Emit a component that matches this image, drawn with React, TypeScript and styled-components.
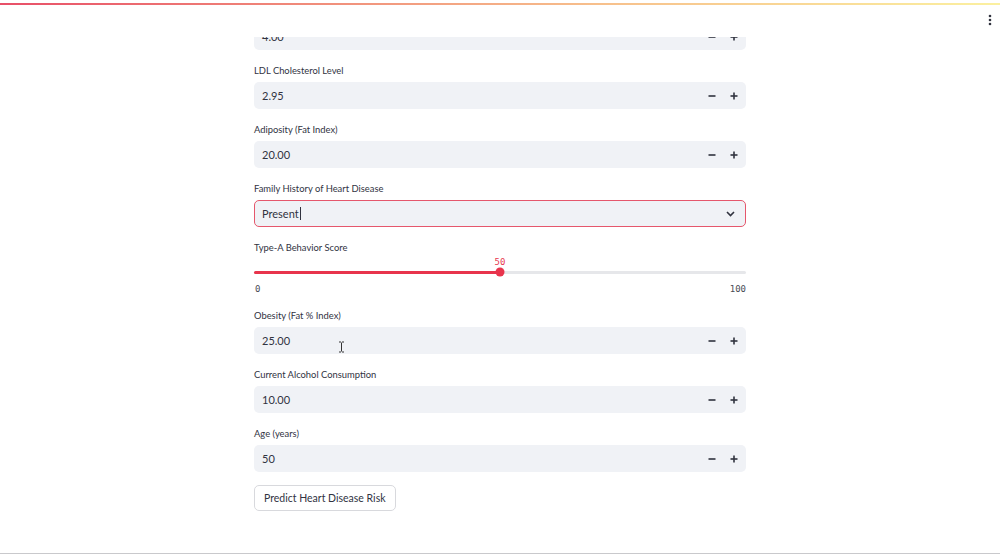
import React from "react";
import styled, { createGlobalStyle } from "styled-components";

const Global = createGlobalStyle`
  html, body { margin: 0; padding: 0; background: #ffffff; overflow: hidden; }
  body { font-family: "Lato", "Noto Sans", sans-serif; color: #31333f; }
  * { box-sizing: border-box; }
`;

const Header = styled.header`
  position: fixed;
  top: 0;
  left: 0;
  right: 0;
  height: 37px;
  background: #ffffff;
  z-index: 5;
`;

const Decoration = styled.div`
  margin-top: 3px;
  height: 2px;
  background: linear-gradient(90deg, #e84f68 0%, #f08a7a 30%, #f7c08c 60%, #fbf0a0 100%);
`;

const MenuButton = styled.div`
  position: absolute;
  right: 6px;
  top: 13px;
  width: 8px;
  height: 14px;
  display: flex;
  align-items: center;
  justify-content: center;
`;

const Main = styled.main`
  width: 492px;
  margin: 0 auto;
  padding-top: 4px;
  display: flex;
  flex-direction: column;
  gap: 13px;
`;

const Widget = styled.div`
  display: flex;
  flex-direction: column;
  gap: 5px;
`;

const Label = styled.label`
  font-size: 9.4px;
  line-height: 13px;
  padding-top: 1px;
  height: 14px;
  color: #31333f;
`;

const Field = styled.div<{ $focused?: boolean }>`
  height: 27px;
  border-radius: 5px;
  background: #f0f2f6;
  display: flex;
  align-items: center;
  padding-left: 7px;
  border: 1px solid ${(p) => (p.$focused ? "#e5576c" : "transparent")};
  position: relative;
`;

const Value = styled.span`
  flex: 1;
  font-size: 11px;
  color: #31333f;
  display: flex;
  align-items: center;
`;

const Caret = styled.span`
  display: inline-block;
  width: 1px;
  height: 13px;
  background: #31333f;
  margin-left: 1px;
`;

const StepGroup = styled.div`
  display: flex;
  height: 100%;
`;

const StepButton = styled.div`
  width: 22px;
  height: 100%;
  display: flex;
  align-items: center;
  justify-content: center;
  font-size: 12px;
  font-weight: 700;
  color: #31333f;
`;

const Chevron = styled.div`
  width: 30px;
  display: flex;
  align-items: center;
  justify-content: center;
`;

const SliderArea = styled.div`
  margin-top: -4px;
  display: flex;
  flex-direction: column;
`;

const ValueRow = styled.div`
  position: relative;
  height: 12px;
`;

const ThumbValue = styled.span`
  position: absolute;
  top: 1px;
  transform: translateX(-50%);
  font-family: "DejaVu Sans Mono", "Liberation Mono", monospace;
  font-size: 9px;
  line-height: 12px;
  color: #e8384f;
`;

const TrackRow = styled.div`
  position: relative;
  height: 10px;
  display: flex;
  align-items: center;
`;

const Track = styled.div`
  width: 100%;
  height: 3px;
  border-radius: 2px;
  background: #e6e7ea;
  position: relative;
`;

const TrackFill = styled.div`
  position: absolute;
  left: 0;
  top: 0;
  bottom: 0;
  background: #e8344c;
  border-radius: 2px;
`;

const Thumb = styled.div`
  position: absolute;
  top: 50%;
  width: 9px;
  height: 9px;
  border-radius: 50%;
  background: #e8344c;
  transform: translate(-50%, -50%);
`;

const TickRow = styled.div`
  margin-top: 6px;
  height: 12px;
  display: flex;
  justify-content: space-between;
  font-family: "DejaVu Sans Mono", "Liberation Mono", monospace;
  font-size: 9px;
  line-height: 12px;
  color: #4a4c55;
  padding-left: 1px;
`;

const Button = styled.button`
  align-self: flex-start;
  height: 26px;
  padding: 0 9px;
  border: 1px solid #d8d9dd;
  border-radius: 5px;
  background: #ffffff;
  font-family: "Lato", "Noto Sans", sans-serif;
  font-size: 10.5px;
  color: #31333f;
`;

const MouseCursor = styled.svg`
  position: fixed;
  left: 338px;
  top: 341px;
  z-index: 6;
`;

const BottomRule = styled.div`
  position: fixed;
  left: 0;
  right: 0;
  bottom: 1px;
  height: 1px;
  background: #c9c9cc;
`;

type NumberFieldProps = { label: string; value: string };

const NumberField = ({ label, value }: NumberFieldProps) => (
  <Widget>
    <Label>{label}</Label>
    <Field>
      <Value>{value}</Value>
      <StepGroup>
        <StepButton>
          <svg width="8" height="8" viewBox="0 0 8 8">
            <rect x="0.5" y="3.2" width="7" height="1.6" fill="#31333f" />
          </svg>
        </StepButton>
        <StepButton>
          <svg width="8" height="8" viewBox="0 0 8 8">
            <rect x="0.5" y="3.2" width="7" height="1.6" fill="#31333f" />
            <rect x="3.2" y="0.5" width="1.6" height="7" fill="#31333f" />
          </svg>
        </StepButton>
      </StepGroup>
    </Field>
  </Widget>
);

const SliderField = ({ label, value, min, max }: { label: string; value: number; min: number; max: number }) => {
  const pct = ((value - min) / (max - min)) * 100;
  return (
    <Widget>
      <Label>{label}</Label>
      <SliderArea>
        <ValueRow>
          <ThumbValue style={{ left: `${pct}%` }}>{value}</ThumbValue>
        </ValueRow>
        <TrackRow>
          <Track>
            <TrackFill style={{ width: `${pct}%` }} />
            <Thumb style={{ left: `${pct}%` }} />
          </Track>
        </TrackRow>
        <TickRow>
          <span>{min}</span>
          <span>{max}</span>
        </TickRow>
      </SliderArea>
    </Widget>
  );
};

export default function App() {
  return (
    <>
      <Global />
      <Header>
        <Decoration />
        <MenuButton>
          <svg width="4" height="12" viewBox="0 0 4 12">
            <circle cx="2" cy="2" r="1.3" fill="#31333f" />
            <circle cx="2" cy="6" r="1.3" fill="#31333f" />
            <circle cx="2" cy="10" r="1.3" fill="#31333f" />
          </svg>
        </MenuButton>
      </Header>
      <Main>
        <NumberField label="Tobacco Consumption (kg)" value="4.00" />
        <NumberField label="LDL Cholesterol Level" value="2.95" />
        <NumberField label="Adiposity (Fat Index)" value="20.00" />
        <Widget>
          <Label>Family History of Heart Disease</Label>
          <Field $focused>
            <Value>
              Present
              <Caret />
            </Value>
            <Chevron>
              <svg width="9" height="6" viewBox="0 0 9 6">
                <path d="M1 1 L4.5 4.5 L8 1" fill="none" stroke="#31333f" strokeWidth="1.6" />
              </svg>
            </Chevron>
          </Field>
        </Widget>
        <SliderField label="Type-A Behavior Score" value={50} min={0} max={100} />
        <NumberField label="Obesity (Fat % Index)" value="25.00" />
        <NumberField label="Current Alcohol Consumption" value="10.00" />
        <NumberField label="Age (years)" value="50" />
        <Button>Predict Heart Disease Risk</Button>
      </Main>
      <MouseCursor width="7" height="12" viewBox="0 0 7 12">
        <path d="M1 1 H3 M4 1 H6 M3.5 1.5 V10.5 M1 11 H3 M4 11 H6" stroke="#333" strokeWidth="1" fill="none" />
      </MouseCursor>
      <BottomRule />
    </>
  );
}
